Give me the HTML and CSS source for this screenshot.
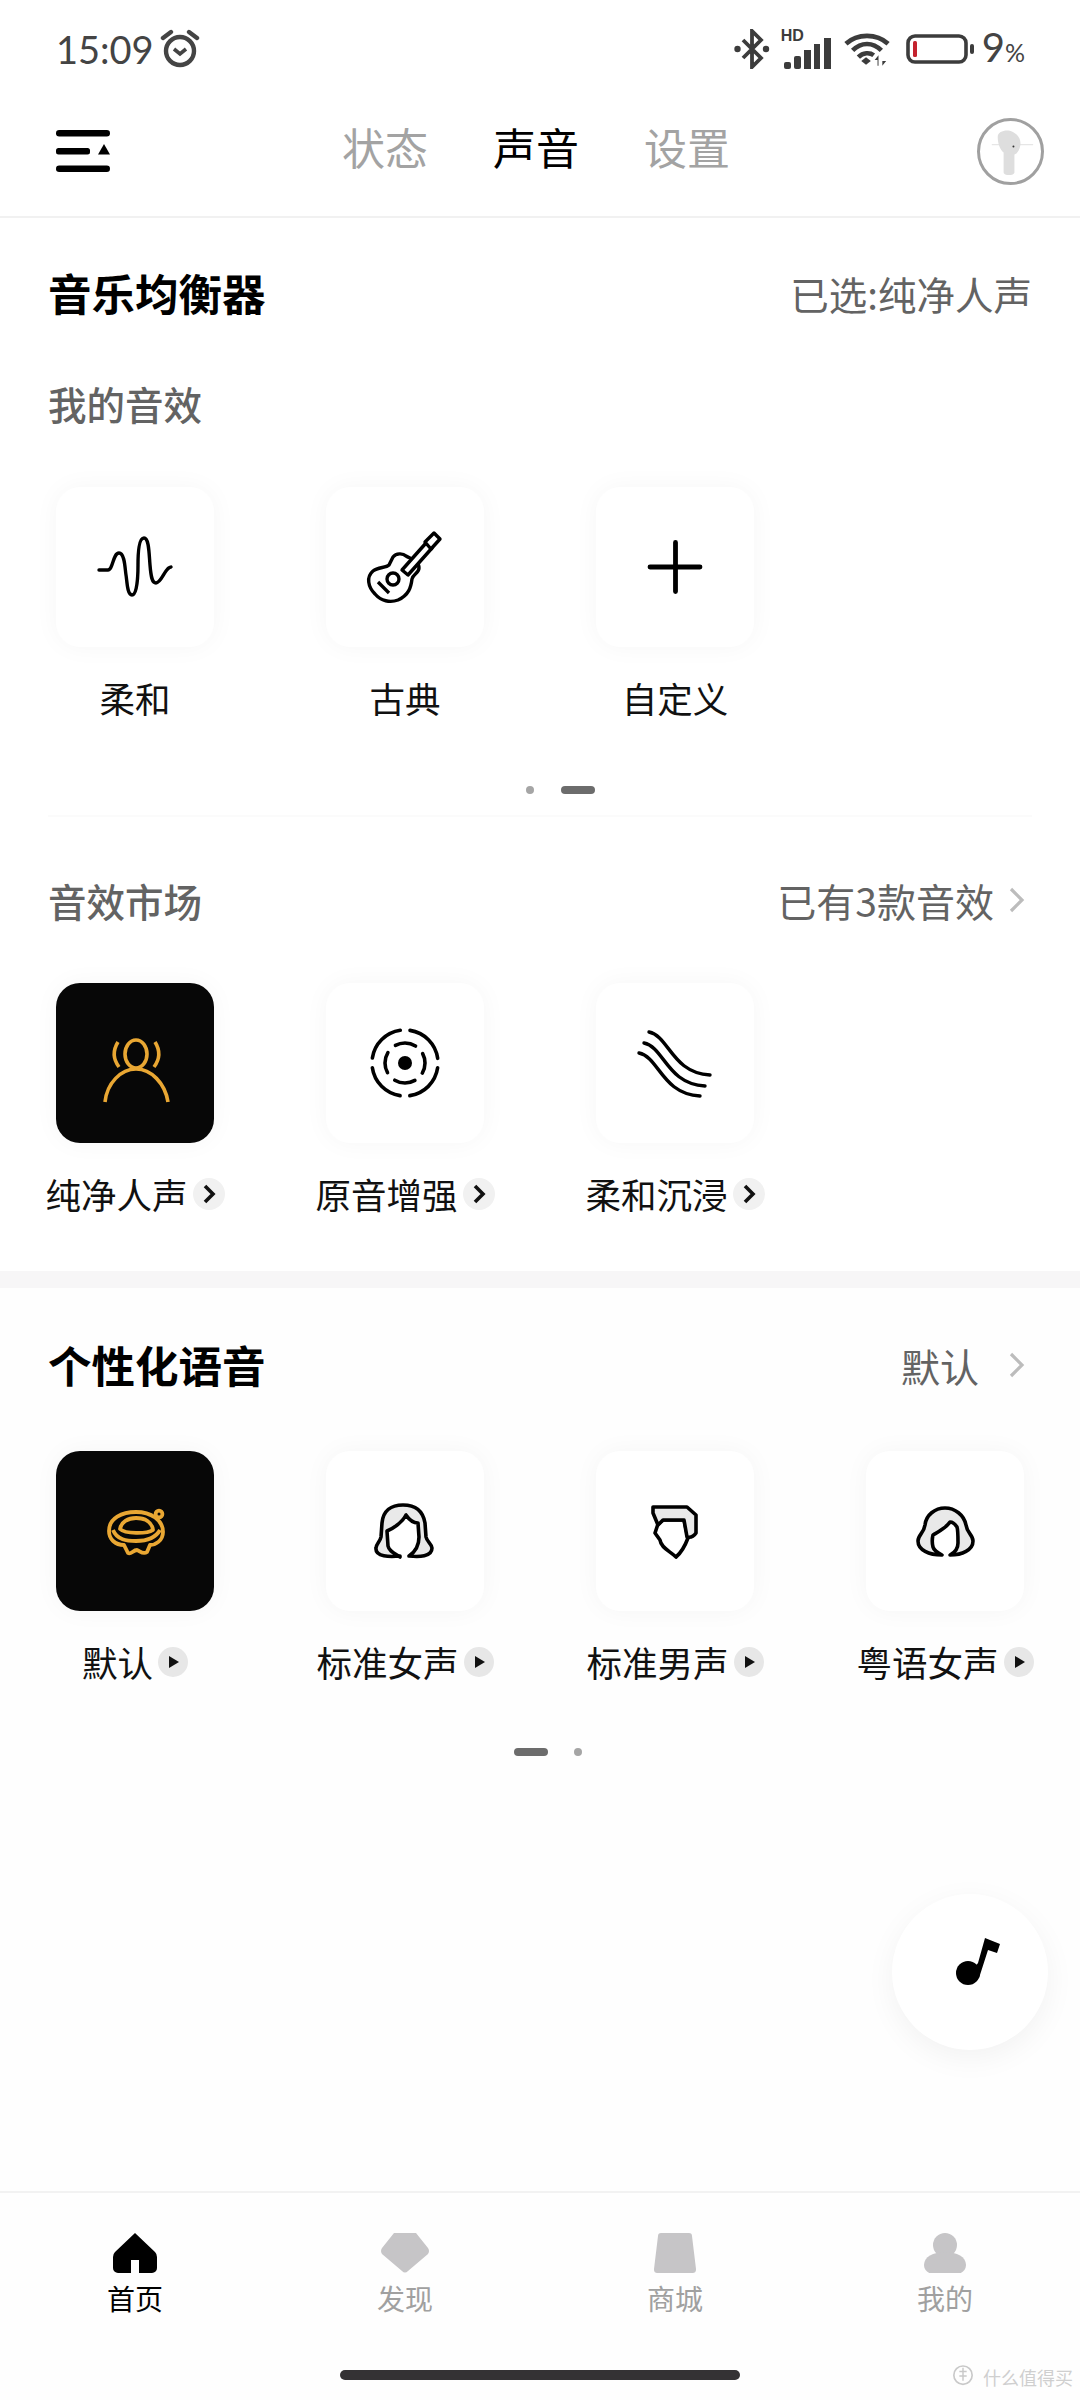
FILE: index.html
```html
<!DOCTYPE html>
<html lang="zh">
<head>
<meta charset="utf-8">
<title>声音</title>
<link rel="stylesheet" href="styles.css">
</head>
<body>
<div class="phone">
  <div class="status">
    <div class="status-left">
      <span class="time">15:09</span>
      <svg class="ic-alarm" viewBox="0 0 40 40"><circle cx="20" cy="23" r="14" fill="none" stroke="#444" stroke-width="4.4"/><path d="M14 21l6 5 6-5" fill="none" stroke="#444" stroke-width="3.6"/><path d="M3 10l8-6M37 10l-8-6" stroke="#444" stroke-width="4.4" stroke-linecap="round"/></svg>
    </div>
    <div class="status-right">
      <svg class="ic-bt" viewBox="0 0 36 40"><path d="M9 11l18 18-9 9V2l9 9L9 29" fill="none" stroke="#3c3c3c" stroke-width="3.8"/><circle cx="3.5" cy="20" r="3.2" fill="#3c3c3c"/><circle cx="32" cy="20" r="3.2" fill="#3c3c3c"/></svg>
      <div class="signal">
        <span class="hd">HD</span>
        <svg class="ic-bars" viewBox="0 0 50 32"><rect x="3" y="24" width="7" height="7" rx="2" fill="#3c3c3c"/><rect x="13" y="18" width="7" height="13" rx="2" fill="#3c3c3c"/><rect x="23" y="12" width="7" height="19" fill="#3c3c3c"/><rect x="33" y="6" width="6" height="25" fill="#3c3c3c"/><rect x="43" y="0" width="7" height="31" fill="#3c3c3c"/></svg>
      </div>
      <svg class="ic-wifi" viewBox="0 0 48 34"><path d="M2 11C14 0 34 0 46 11M9 18C18 9 30 9 39 18" fill="none" stroke="#3c3c3c" stroke-width="4.8"/><path d="M15 25C20 20 27 20 31 23" fill="none" stroke="#3c3c3c" stroke-width="4.8"/><path d="M18 29l5-4 5 4-5 4z" fill="#3c3c3c"/><path d="M35 34v-6h-3l4-5 0 11zM40 23v6h4l-4 5 0-11z" fill="#3c3c3c"/></svg>
      <svg class="ic-batt" viewBox="0 0 68 30"><rect x="2" y="2" width="58" height="26" rx="7" fill="none" stroke="#3c3c3c" stroke-width="3.6"/><rect x="7" y="7" width="4" height="16" rx="1.5" fill="#c4232f"/><rect x="64" y="10" width="4" height="10" rx="2" fill="#3c3c3c"/></svg>
      <span class="pct">9<small>%</small></span>
    </div>
  </div>

  <header class="nav">
    <svg class="ic-menu" viewBox="0 0 54 42"><rect x="0" y="0" width="54" height="6.5" rx="3.2"/><rect x="0" y="18" width="34" height="6.5" rx="2.5"/><rect x="0" y="35.5" width="54" height="6.5" rx="3.2"/><path d="M48 14l6 10.5H42z"/></svg>
    <nav class="tabs">
      <span class="tab">状态</span>
      <span class="tab tab-on">声音</span>
      <span class="tab">设置</span>
    </nav>
    <div class="earbud">
      <svg class="ic-bud" viewBox="0 0 62 62"><path d="M12 24h42" stroke="#e6e6e6" stroke-width="1.5"/><path d="M18 16c0-6 10-8 15-5 6 3 9 8 8 14-1 5-3 8-6 9v18c0 4-11 4-11 0V32c-4-3-6-10-6-16z" fill="#dedede"/><circle cx="34" cy="26" r="1" fill="#333"/></svg>
    </div>
  </header>

  <section class="block block-eq">
    <div class="head-row">
      <h1 class="title">音乐均衡器</h1>
      <span class="side-text">已选:纯净人声</span>
    </div>
    <h2 class="sub sub-mine">我的音效</h2>
    <div class="row">
      <div class="item">
        <div class="card"><svg class="ic" viewBox="0 0 80 80"><path d="M4 43h9c5 0 5-17 11-17s6 17 7 22 1 20 6 20 6-18 6-30 1-27 6-27 5 15 6 27 2 18 6 18 7-8 10-12 3-3 5-4" fill="none" stroke="#000" stroke-width="3.4" stroke-linecap="round"/></svg></div>
        <div class="label">柔和</div>
      </div>
      <div class="item">
        <div class="card"><svg class="ic" viewBox="0 0 80 80"><g fill="none" stroke="#000" stroke-width="3.4" stroke-linejoin="round"><path d="M28 30c3-4 10-4 13-1 5 3 13 4 13 12 0 5-6 6-7 11-1 8-3 16-14 21-8 3-17 1-23-6-7-7-9-17-2-23 5-4 13-3 16-6z"/><path d="M37 43L61 16l6 5-24 27z" fill="#fff"/><path d="M60 15l9-9 6 6-9 10z" fill="#fff"/><circle cx="28" cy="52" r="6"/><path d="M13 55l11 11"/></g></svg></div>
        <div class="label">古典</div>
      </div>
      <div class="item">
        <div class="card"><svg class="ic" viewBox="0 0 80 80"><path d="M15 40h50M40.500 15.500v49" stroke="#000" stroke-width="4.8" stroke-linecap="round"/></svg></div>
        <div class="label">自定义</div>
      </div>
    </div>
    <div class="dots dots-a"><i class="dot"></i><i class="pill"></i></div>
    <div class="hair"></div>
  </section>

  <section class="block block-market">
    <div class="head-row">
      <h2 class="sub">音效市场</h2>
      <span class="side-link"><span class="side-grey">已有3款音效</span><svg class="chev" viewBox="0 0 17 28"><path d="M3 3l11 11L3 25" fill="none" stroke="#bcbcbc" stroke-width="3.2"/></svg></span>
    </div>
    <div class="row">
      <div class="item">
        <div class="card card-on"><svg class="ic" viewBox="0 0 80 80"><g fill="none" stroke="#e9a733" stroke-width="3.6"><ellipse cx="41" cy="31" rx="11" ry="14"/><path d="M10 79C12 60 26 46 41 46s29 14 32 33"/><path d="M23 19c-5 8-5 17 1 25M60 19c5 8 5 17-1 25"/></g></svg></div>
        <div class="label"><span>纯净人声</span><b class="badge"><svg viewBox="0 0 32 32"><path d="M12 8l8 8-8 8" fill="none" stroke="#111" stroke-width="3.6"/></svg></b></div>
      </div>
      <div class="item">
        <div class="card"><svg class="ic" viewBox="0 0 80 80"><g fill="none" stroke="#000" stroke-width="3.6" stroke-linecap="round"><circle cx="40" cy="40" r="33" stroke-dasharray="42 9.8" stroke-dashoffset="-4.9"/><circle cx="40" cy="40" r="20" stroke-dasharray="21 10.4" stroke-dashoffset="-20.9"/></g><circle cx="40" cy="40" r="7" fill="#000"/></svg></div>
        <div class="label"><span>原音增强</span><b class="badge"><svg viewBox="0 0 32 32"><path d="M12 8l8 8-8 8" fill="none" stroke="#111" stroke-width="3.6"/></svg></b></div>
      </div>
      <div class="item">
        <div class="card"><svg class="ic" viewBox="0 0 80 80"><g fill="none" stroke="#000" stroke-width="3.4" stroke-linecap="round"><path d="M14 9c20 4 23 41 61 43"/><path d="M9 20c20 4 23 41 61 43"/><path d="M4 30c20 4 23 41 61 43"/></g></svg></div>
        <div class="label"><span>柔和沉浸</span><b class="badge"><svg viewBox="0 0 32 32"><path d="M12 8l8 8-8 8" fill="none" stroke="#111" stroke-width="3.6"/></svg></b></div>
      </div>
    </div>
  </section>

  <div class="band"></div>

  <section class="block block-voice">
    <div class="head-row">
      <h1 class="title">个性化语音</h1>
      <span class="side-link"><span class="side-grey">默认</span><svg class="chev chev-far" viewBox="0 0 17 28"><path d="M3 3l11 11L3 25" fill="none" stroke="#bcbcbc" stroke-width="3.2"/></svg></span>
    </div>
    <div class="row">
      <div class="item">
        <div class="card card-on"><svg class="ic" viewBox="0 0 80 80"><g fill="none" stroke="#e9a733" stroke-width="3.8" stroke-linejoin="round"><path d="M14 40C14 27 27 21 41 21c15 0 27 8 27 20 0 9-8 13-13 13l-3 7c-4 3-7-1-10-2-4 0-6 5-9 3l-4-8c-9 0-15-6-15-14z"/><path d="M25 38c1-7 8-11 16-11 9 0 16 4 17 12-6 4-28 4-33-1z"/><path d="M18 39c4 10 14 11 23 11s19-2 24-11"/><circle cx="64" cy="23" r="3.4"/></g></svg></div>
        <div class="label"><span>默认</span><b class="badge badge-play"><svg viewBox="0 0 30 30"><path d="M11 9l10 6-10 6z" fill="#111"/></svg></b></div>
      </div>
      <div class="item">
        <div class="card"><svg class="ic" viewBox="0 0 80 80"><path d="M35 65C25 66 10 66 11 57c0-4 4-6 5-11l1-14C18 20 26 14 38 14s20 6 22 18l1 14c1 5 6 7 6 11 0 9-13 9-23 8 6-4 10-9 10-19l-1-14c-6 0-10-5-12-8-4 8-14 14-19 16l1 15c1 5 6 7 12 11z" fill="#e9e9e9" stroke="#000" stroke-width="3.6" stroke-linejoin="round"/></svg></div>
        <div class="label"><span>标准女声</span><b class="badge badge-play"><svg viewBox="0 0 30 30"><path d="M11 9l10 6-10 6z" fill="#111"/></svg></b></div>
      </div>
      <div class="item">
        <div class="card"><svg class="ic" viewBox="0 0 80 80"><g stroke="#000" stroke-width="3.6" stroke-linejoin="round"><path d="M23 33l-3 9 5 7c1 8 10 11 16 17 6-5 9-11 12-19l-4-18H28z" fill="#fff"/><path d="M18 16h34l9 8v18c-2 3-5 5-9 4l-3-17H28l-5 5-5-12z" fill="#e9e9e9"/></g></svg></div>
        <div class="label"><span>标准男声</span><b class="badge badge-play"><svg viewBox="0 0 30 30"><path d="M11 9l10 6-10 6z" fill="#111"/></svg></b></div>
      </div>
      <div class="item">
        <div class="card"><svg class="ic" viewBox="0 0 80 80"><path d="M37 64C24 64 13 59 13 50c0-6 6-8 7-16 1-10 10-17 20-17s19 7 21 17c1 8 7 10 7 16 0 9-11 14-23 14 6-3 8-7 8-12 0-6 0-13-1-16-2-3-5-5-7-5-4 6-12 10-17 13-1 4-1 8 0 12 1 4 5 6 9 8z" fill="#e9e9e9" stroke="#000" stroke-width="3.6" stroke-linejoin="round"/></svg></div>
        <div class="label"><span>粤语女声</span><b class="badge badge-play"><svg viewBox="0 0 30 30"><path d="M11 9l10 6-10 6z" fill="#111"/></svg></b></div>
      </div>
    </div>
    <div class="dots dots-b"><i class="pill"></i><i class="dot"></i></div>
  </section>

  <button class="fab" type="button" aria-label="音乐"><svg viewBox="0 0 80 80"><circle cx="38" cy="41" r="12" fill="#000"/><path d="M41 40L48 31 55 6l15 6-3 9-9-3-9 28z" fill="#000"/></svg></button>

  <footer class="tabbar">
    <div class="bar-item bar-on"><svg viewBox="0 0 44 40"><path d="M22 0L2 19q-2 2-2 5v11a5 5 0 0 0 5 5h13V27h8v13h13a5 5 0 0 0 5-5V24q0-3-2-5z" fill="#000"/></svg><span>首页</span></div>
    <div class="bar-item"><svg class="wide" viewBox="0 0 48 40"><path d="M13 0h22l12 15q2 3 0 6L27 38q-3 3-6 0L1 21q-2-3 0-6z" fill="#c6c5c7"/></svg><span>发现</span></div>
    <div class="bar-item"><svg viewBox="0 0 44 40"><path d="M8 0h28c2 0 3 1 3 3l4 33c0 3-1 4-4 4H5c-3 0-4-1-4-4L5 3c0-2 1-3 3-3z" fill="#c6c5c7"/></svg><span>商城</span></div>
    <div class="bar-item"><svg viewBox="0 0 44 40"><circle cx="22" cy="12" r="12" fill="#c6c5c7"/><path d="M22 19c12 0 21 5 21 13 0 5-4 9-10 9H11C5 41 1 37 1 32c0-8 9-13 21-13z" fill="#c6c5c7"/></svg><span>我的</span></div>
  </footer>
  <div class="home-bar"></div>
  <div class="mark"><svg viewBox="0 0 24 32"><circle cx="12" cy="14" r="10" fill="none" stroke="#c9c9c9" stroke-width="1.8"/><path d="M12 6v14M8 10h8M8 15h8" stroke="#c9c9c9" stroke-width="1.6"/></svg><span>什么值得买</span></div>
</div>
</body>
</html>
```
FILE: styles.css
```css
* { box-sizing: border-box; margin: 0; padding: 0; }
html, body { width: 1080px; height: 2400px; background: #fff; overflow: hidden; }
body { font-family: "Noto Sans CJK SC", "Noto Sans", sans-serif; color: #000; }
.phone { position: relative; width: 1080px; height: 2400px; display: flex; flex-direction: column; background: #fefefe; }

.status { height: 90px; padding: 26px 55px 0 56px; display: flex; justify-content: space-between; align-items: flex-start; background: #fff; }
.status-left, .status-right { display: flex; align-items: center; height: 46px; }
.time { font: 400 38px/46px Lato, Roboto, sans-serif; color: #444; }
.ic-alarm { width: 40px; height: 40px; margin-left: 6px; margin-top: -2px; }
.ic-bt { width: 36px; height: 40px; margin-right: 11px; }
.signal { position: relative; width: 50px; height: 40px; margin-right: 13px; display: flex; align-items: flex-end; }
.hd { position: absolute; left: 0; top: -2px; font: 700 16px/18px "Liberation Sans", sans-serif; color: #3c3c3c; }
.ic-bars { width: 50px; height: 32px; margin-bottom: -1px; }
.ic-wifi { width: 46px; height: 33px; margin-right: 16px; }
.ic-batt { width: 68px; height: 30px; margin-right: 8px; }
.pct { font: 400 40px/46px Lato, Roboto, sans-serif; color: #444; }
.pct small { font-size: 25px; }

.nav { position: relative; height: 128px; display: flex; align-items: center; justify-content: space-between; padding: 0 36px 4px 56px; border-bottom: 2px solid #f1f1f1; background: #fff; }
.ic-menu { width: 54px; height: 42px; fill: #000; }
.tabs { position: absolute; left: 342px; top: 25px; display: flex; gap: 64px; }
.tab { font-size: 43px; line-height: 62px; color: #a3a3a3; width: 87px; white-space: nowrap; }
.tab-on { color: #000; }
.earbud { width: 67px; height: 67px; border-radius: 50%; border: 3px solid #a0a0a0; display: flex; align-items: center; justify-content: center; background: #fff; }
.ic-bud { width: 61px; height: 61px; flex: none; }

.block { padding: 0 48px; background: #fff; }
.block-eq { padding-top: 46px; height: 598px; position: relative; }
.block-market { height: 455px; padding-top: 55px; }
.block-voice { padding-top: 48px; height: 500px; background: transparent; }
.head-row { display: flex; align-items: center; justify-content: space-between; height: 58px; }
.title { font-size: 43.5px; line-height: 58px; font-weight: 700; }
.sub { font-size: 38.5px; line-height: 58px; font-weight: 500; color: #636363; }
.sub-mine { margin-top: 52px; height: 58px; }
.side-text { font-size: 38.5px; line-height: 58px; color: #636363; }
.side-link { display: flex; align-items: center; }
.side-grey { font-size: 39px; line-height: 58px; color: #636363; }
.chev { width: 17px; height: 28px; margin-left: 14px; margin-right: 7px; flex: none; }
.chev-far { margin-left: 29px; }

.row { display: flex; margin: 55px -48px 0; }
.block-market .row { margin-top: 54px; }
.block-voice .row { margin-top: 57px; }
.item { flex: 0 0 270px; display: flex; flex-direction: column; align-items: center; }
.card { width: 158px; height: 160px; border-radius: 24px; background: #fff; box-shadow: 0 0 26px rgba(0,0,0,.04); display: flex; align-items: center; justify-content: center; }
.card-on { background: #070707; }
.ic { width: 80px; height: 80px; }
.label { margin-top: 24px; height: 54px; display: flex; align-items: center; justify-content: center; gap: 5px; font-size: 35.5px; line-height: 54px; color: #111; white-space: nowrap; }
.badge { width: 32px; height: 32px; border-radius: 50%; background: #f1f1f1; display: block; }
.badge svg { display: block; width: 100%; height: 100%; }
.badge-play { width: 30px; height: 30px; background: #e7e7e7; }

.dots { display: flex; align-items: center; margin-top: 61px; }
.dots-a { padding-left: 526px; gap: 27px; margin-left: -48px; }
.dots-b { padding-left: 466px; gap: 26px; margin-top: 59px; }
.dot { width: 8px; height: 8px; border-radius: 50%; background: #a5a5a5; display: block; }
.pill { width: 34px; height: 8px; border-radius: 4px; background: #6c6c6c; display: block; }
.hair { position: absolute; left: 48px; right: 48px; bottom: -1px; height: 2px; background: #fbfbfb; }

.band { height: 17px; background: #f7f6f7; }

.fab { position: absolute; left: 892px; top: 1894px; width: 156px; height: 156px; border: 0; border-radius: 50%; background: #fff; box-shadow: 0 8px 30px rgba(0,0,0,.05); display: flex; align-items: center; justify-content: center; }
.fab svg { width: 80px; height: 80px; }

.tabbar { position: absolute; left: 0; right: 0; top: 2191px; height: 130px; border-top: 2px solid #f2f2f2; display: flex; padding-top: 40px; }
.bar-item { width: 270px; display: flex; flex-direction: column; align-items: center; color: #a0a0a0; font-size: 28px; line-height: 38px; }
.bar-on { color: #000; }
.bar-item svg { width: 44px; height: 40px; display: block; margin-bottom: 6px; }
.bar-item svg.wide { width: 48px; }
.home-bar { position: absolute; left: 340px; top: 2370px; width: 400px; height: 10px; border-radius: 5px; background: #343234; }
.mark { position: absolute; left: 952px; top: 2362px; display: flex; align-items: center; gap: 9px; color: #cfcfcf; font-size: 18px; }
.mark svg { width: 22px; height: 30px; }
```
